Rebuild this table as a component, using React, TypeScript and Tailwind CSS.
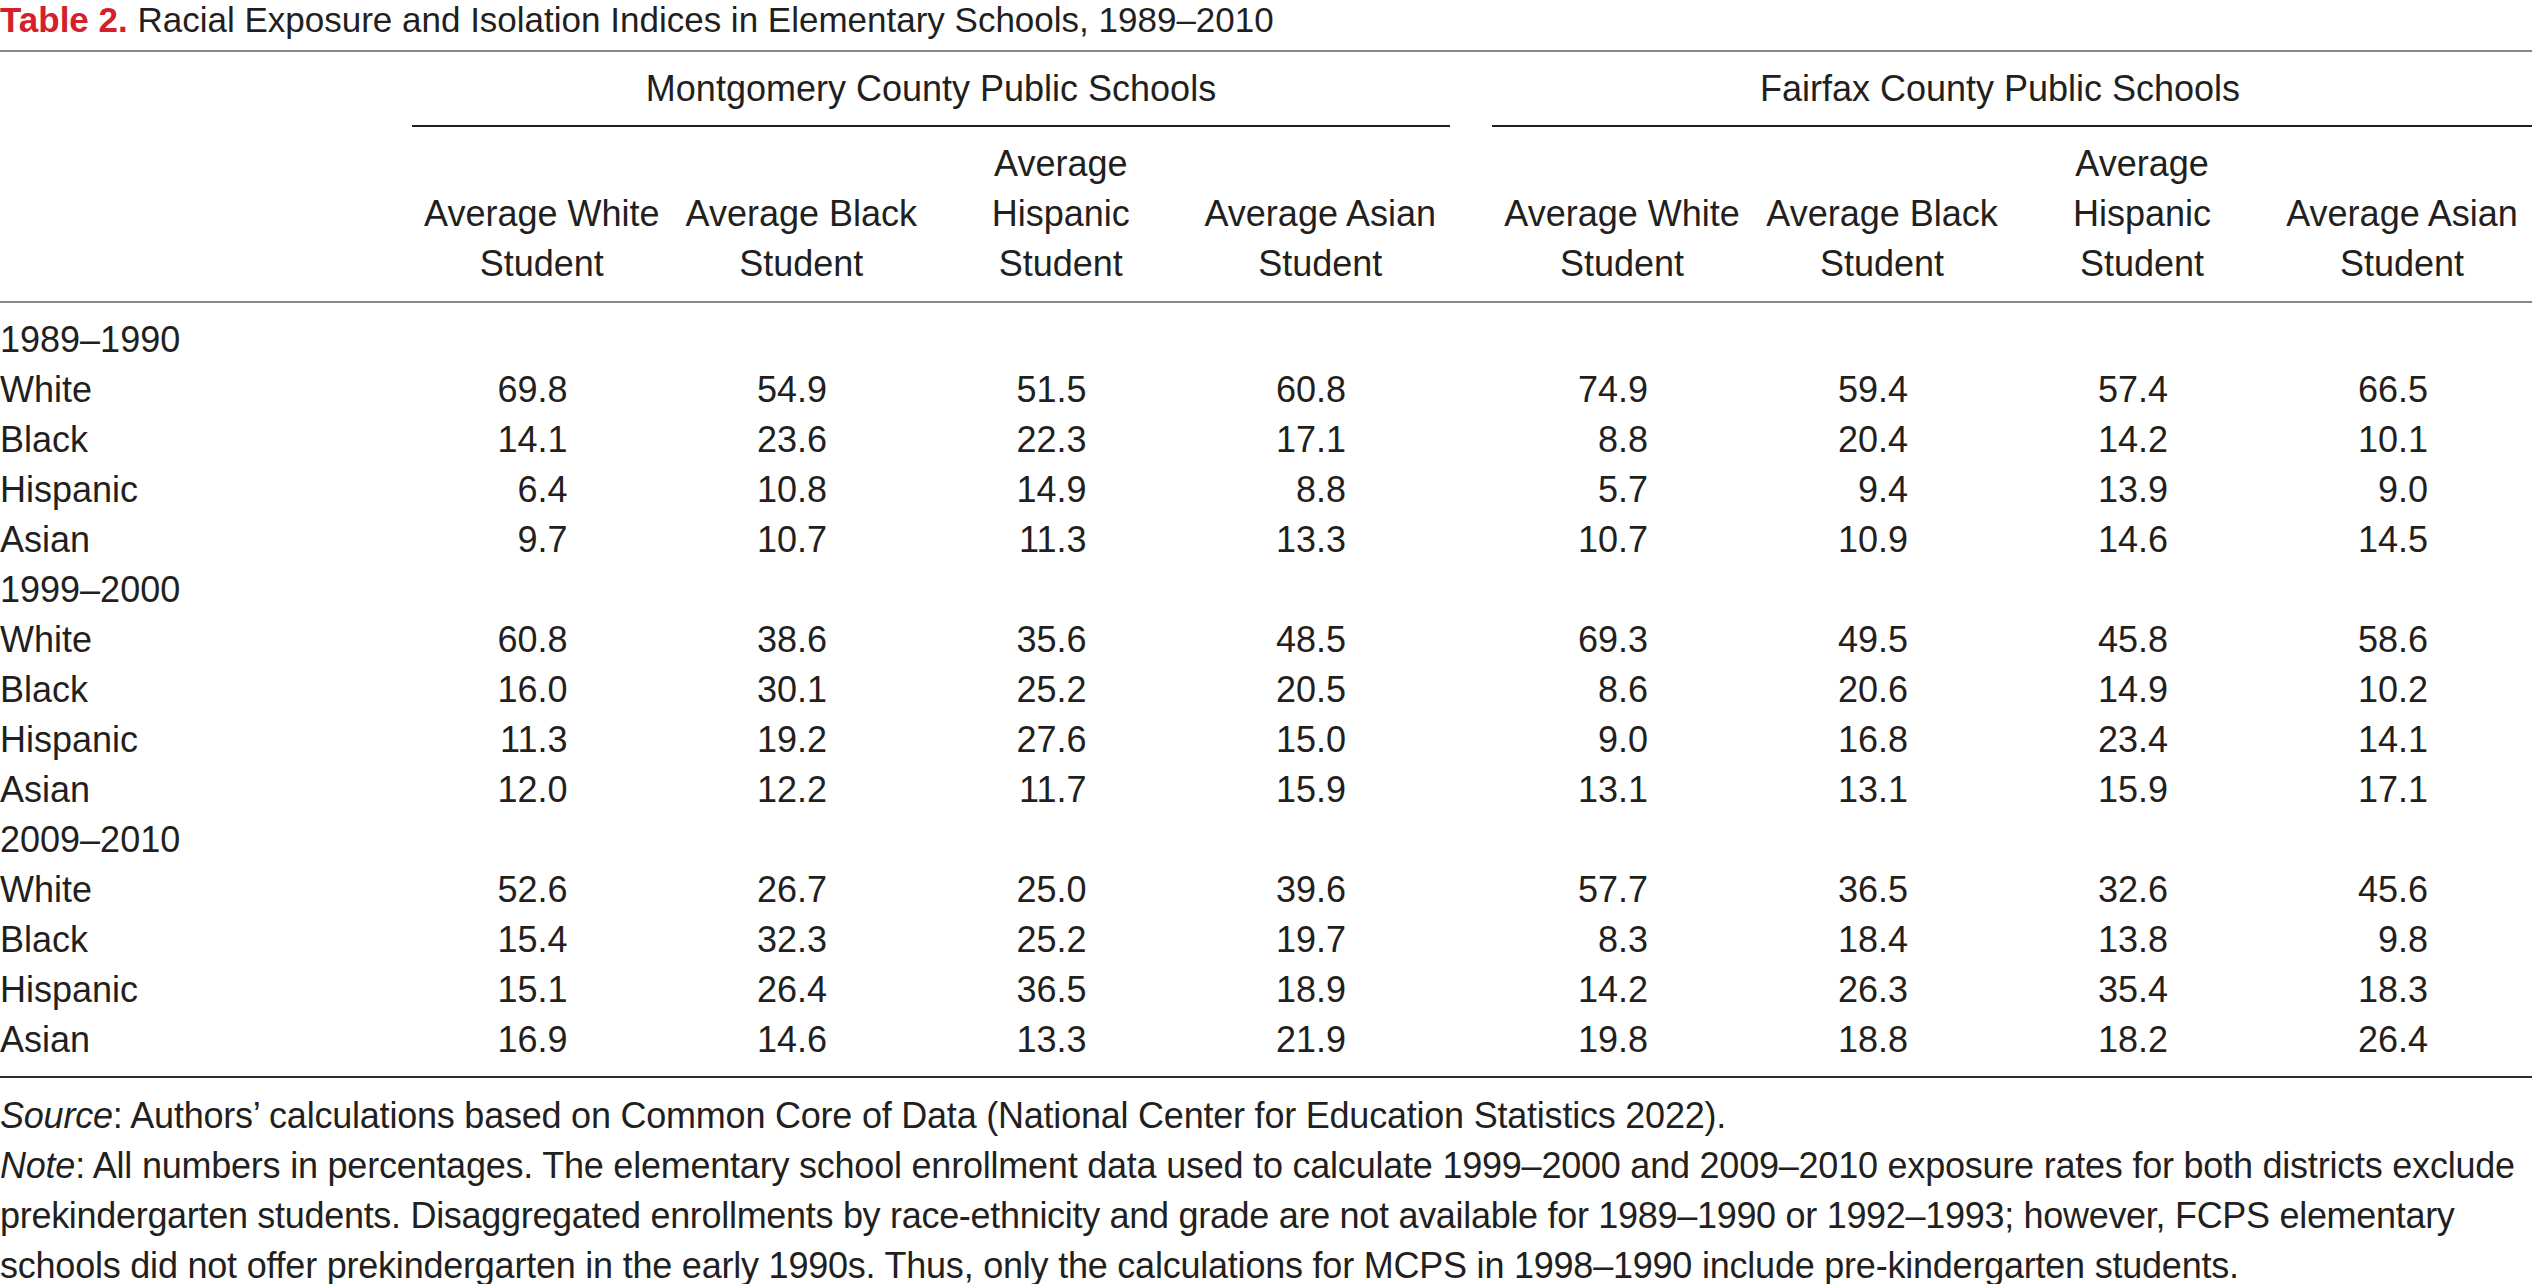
// ---------------------------------------------------------------------------
// Table 2 — Racial exposure and isolation indices in elementary schools.
//
// Two districts (MCPS, FCPS), four "average student" columns each, three
// school years with four race rows per year. Numbers are percentages.
// ---------------------------------------------------------------------------

// --- Types ------------------------------------------------------------------

interface RaceRow {
  label: string;
  mcps: string[];
  fcps: string[];
}

interface YearBlock {
  year: string;
  rows: RaceRow[];
}

// --- Data -------------------------------------------------------------------

const COLUMN_HEADS: string[][] = [
  ["Average White", "Student"],
  ["Average Black", "Student"],
  ["Average", "Hispanic", "Student"],
  ["Average Asian", "Student"],
];

const YEARS: YearBlock[] = [
  {
    year: "1989–1990",
    rows: [
      { label: "White", mcps: ["69.8", "54.9", "51.5", "60.8"], fcps: ["74.9", "59.4", "57.4", "66.5"] },
      { label: "Black", mcps: ["14.1", "23.6", "22.3", "17.1"], fcps: ["8.8", "20.4", "14.2", "10.1"] },
      { label: "Hispanic", mcps: ["6.4", "10.8", "14.9", "8.8"], fcps: ["5.7", "9.4", "13.9", "9.0"] },
      { label: "Asian", mcps: ["9.7", "10.7", "11.3", "13.3"], fcps: ["10.7", "10.9", "14.6", "14.5"] },
    ],
  },
  {
    year: "1999–2000",
    rows: [
      { label: "White", mcps: ["60.8", "38.6", "35.6", "48.5"], fcps: ["69.3", "49.5", "45.8", "58.6"] },
      { label: "Black", mcps: ["16.0", "30.1", "25.2", "20.5"], fcps: ["8.6", "20.6", "14.9", "10.2"] },
      { label: "Hispanic", mcps: ["11.3", "19.2", "27.6", "15.0"], fcps: ["9.0", "16.8", "23.4", "14.1"] },
      { label: "Asian", mcps: ["12.0", "12.2", "11.7", "15.9"], fcps: ["13.1", "13.1", "15.9", "17.1"] },
    ],
  },
  {
    year: "2009–2010",
    rows: [
      { label: "White", mcps: ["52.6", "26.7", "25.0", "39.6"], fcps: ["57.7", "36.5", "32.6", "45.6"] },
      { label: "Black", mcps: ["15.4", "32.3", "25.2", "19.7"], fcps: ["8.3", "18.4", "13.8", "9.8"] },
      { label: "Hispanic", mcps: ["15.1", "26.4", "36.5", "18.9"], fcps: ["14.2", "26.3", "35.4", "18.3"] },
      { label: "Asian", mcps: ["16.9", "14.6", "13.3", "21.9"], fcps: ["19.8", "18.8", "18.2", "26.4"] },
    ],
  },
];

// label | 4 MCPS cols | gutter | 4 FCPS cols
const GRID = "grid grid-cols-[412px_repeat(4,259.5px)_42px_repeat(4,260px)]";

// ---------------------------------------------------------------------------
// Pieces
// ---------------------------------------------------------------------------

function HeadCell({ lines }: { lines: string[] }) {
  return (
    <div className="flex flex-col items-center justify-end text-center">
      {lines.map((l) => (
        <span key={l} className="whitespace-nowrap">
          {l}
        </span>
      ))}
    </div>
  );
}

function Num({ v }: { v: string }) {
  return <div className="pr-[104px] text-right">{v}</div>;
}

// ---------------------------------------------------------------------------
// Page
// ---------------------------------------------------------------------------

export default function App() {
  return (
    <div className="h-[1284px] w-[2532px] overflow-hidden bg-white font-['Liberation_Sans',Arial,sans-serif] text-[#231f20]">
      {/* Caption */}
      <div className="whitespace-nowrap text-[35px] leading-[39px]">
        <span className="font-bold text-[#d5202c]">Table 2.</span> Racial Exposure and Isolation Indices in
        Elementary Schools, 1989–2010
      </div>

      <div className="mt-[11px] h-[2px] bg-[#878787]" />

      <div className="text-[36px] leading-[50px]">
        {/* District headers */}
        <div className={`${GRID} pt-3`}>
          <div />
          <div className="col-span-4 flex flex-col">
            <div className="text-center">Montgomery County Public Schools</div>
            <div className="mt-[11px] h-[1.5px] bg-[#231f20]" />
          </div>
          <div />
          <div className="col-span-4 flex flex-col">
            <div className="pr-6 text-center">Fairfax County Public Schools</div>
            <div className="mt-[11px] h-[1.5px] bg-[#231f20]" />
          </div>
        </div>

        {/* Column headers */}
        <div className={`${GRID} pb-3 pt-3`}>
          <div />
          {COLUMN_HEADS.map((h) => (
            <HeadCell key={"m" + h.join()} lines={h} />
          ))}
          <div />
          {COLUMN_HEADS.map((h) => (
            <HeadCell key={"f" + h.join()} lines={h} />
          ))}
        </div>

        <div className="h-[2px] bg-[#878787]" />

        {/* Body */}
        <div className="pb-[11px] pt-3">
          {YEARS.map((y) => (
            <div key={y.year}>
              <div className={GRID}>
                <div>{y.year}</div>
              </div>
              {y.rows.map((r) => (
                <div key={y.year + r.label} className={GRID}>
                  <div>{r.label}</div>
                  {r.mcps.map((v, i) => (
                    <Num key={"m" + i} v={v} />
                  ))}
                  <div />
                  {r.fcps.map((v, i) => (
                    <Num key={"f" + i} v={v} />
                  ))}
                </div>
              ))}
            </div>
          ))}
        </div>

        <div className="h-[2px] bg-[#2b2b2b]" />

        {/* Notes */}
        <div className="whitespace-nowrap pt-[13px] tracking-[-0.22px]">
          <div>
            <i>Source</i>: Authors’ calculations based on Common Core of Data (National Center for Education
            Statistics 2022).
          </div>
          <div>
            <i>Note</i>: All numbers in percentages. The elementary school enrollment data used to calculate
            1999–2000 and 2009–2010 exposure rates for both districts exclude
          </div>
          <div className="tracking-[-0.3px]">
            prekindergarten students. Disaggregated enrollments by race-ethnicity and grade are not available for
            1989–1990 or 1992–1993; however, FCPS elementary
          </div>
          <div>
            schools did not offer prekindergarten in the early 1990s. Thus, only the calculations for MCPS in
            1998–1990 include pre-kindergarten students.
          </div>
        </div>
      </div>
    </div>
  );
}
